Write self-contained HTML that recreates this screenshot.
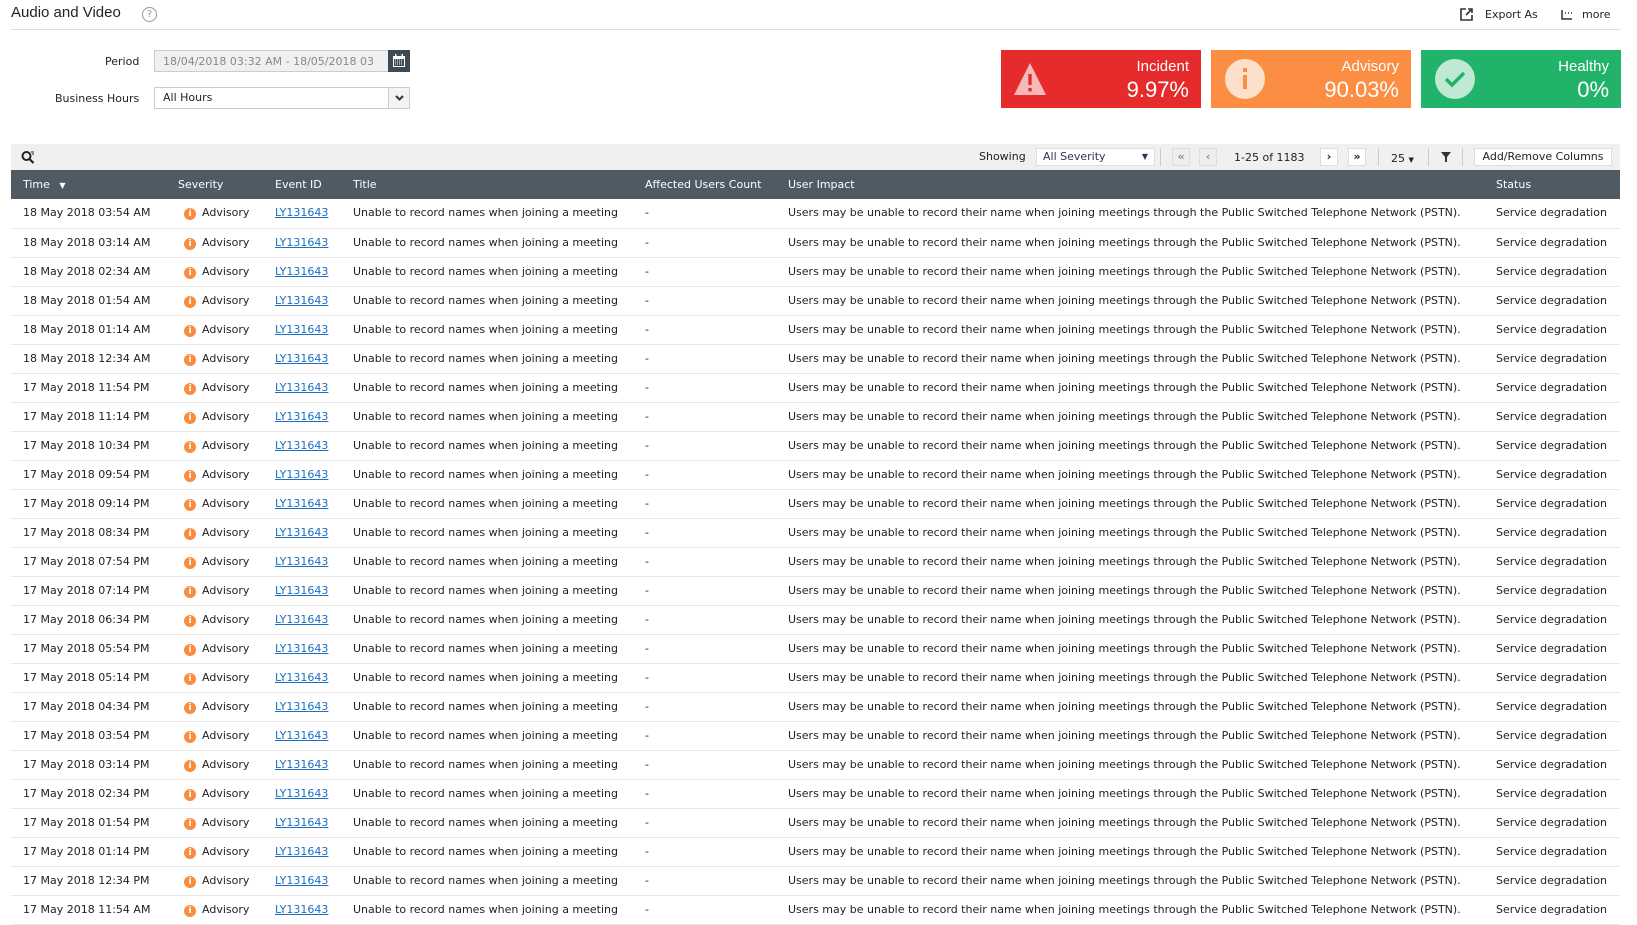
<!DOCTYPE html>
<html><head><meta charset="utf-8"><style>
*{box-sizing:border-box;margin:0;padding:0}
body{width:1637px;height:869px;overflow:hidden;background:#fff;font-family:"DejaVu Sans","Liberation Sans",sans-serif;font-size:11px;color:#222;position:relative}
.a{position:absolute;white-space:nowrap}
.box{position:absolute;top:50px;height:58px;width:200px;color:#fff;font-family:"Liberation Sans",sans-serif}
.box .l{position:absolute;right:12px;top:8px;font-size:15px}
.box .v{position:absolute;right:12px;top:27px;font-size:22px}
.btn{position:absolute;top:148px;height:18px;border:1px solid #ddd;background:#fff;text-align:center;line-height:16px;font-size:11px}
table{position:absolute;left:11px;top:170px;width:1609px;border-collapse:collapse;font-size:11px}
th{background:#4e5b65;color:#fff;font-weight:normal;text-align:left;height:29px;font-size:11px;padding:0}
td{height:29px;border-bottom:1px solid #e6e6e6;padding:0;white-space:nowrap;line-height:14px}
a{color:#1a6fc4;text-decoration:underline}
.ic{display:inline-block;width:12px;height:12px;border-radius:50%;background:#f98d3f;color:#fff;font-size:9px;font-weight:bold;text-align:center;line-height:12px;margin-right:6px;vertical-align:baseline;position:relative;top:0px}
</style></head><body>
<div class="a" style="left:11px;top:4px;font-size:15px;font-family:'Liberation Sans',sans-serif;color:#222">Audio and Video</div>
<div class="a" style="left:142px;top:7px;width:15px;height:15px;border:1px solid #999;border-radius:50%;color:#999;font-size:10px;text-align:center;line-height:13px">?</div>
<div class="a" style="left:11px;top:29px;width:1609px;height:1px;background:#ddd"></div>
<svg class="a" style="left:1460px;top:8px" width="13" height="13" viewBox="0 0 13 13"><path d="M6 1H1v11h11V7" fill="none" stroke="#333" stroke-width="1.6"/><path d="M6 7l6-6M8 1h4v4" fill="none" stroke="#333" stroke-width="1.6"/></svg>
<div class="a" style="left:1485px;top:8px;font-size:11px">Export As</div>
<svg class="a" style="left:1561px;top:9px" width="12" height="11"><path d="M1 1v9h10M4 4h1M7 4h1M10 4h1" stroke="#333" stroke-width="1.5" fill="none"/></svg>
<div class="a" style="left:1582px;top:8px;font-size:11px">more</div>

<div class="a" style="left:105px;top:55px;font-size:11px">Period</div>
<div class="a" style="left:154px;top:50px;width:235px;height:22px;border:1px solid #ccc;background:#f0f0f0;color:#888;font-size:11px;padding:4px 8px;overflow:hidden">18/04/2018 03:32 AM - 18/05/2018 03</div>
<div class="a" style="left:388px;top:50px;width:22px;height:22px;background:#3d4a54"><svg width="22" height="22"><rect x="5" y="6" width="12" height="11" fill="#fff"/><rect x="6" y="9" width="10" height="7" fill="#3d4a54"/><path d="M7 10h1M9 10h1M11 10h1M13 10h1M7 12h1M9 12h1M11 12h1M13 12h1M7 14h1M9 14h1M11 14h1M13 14h1" stroke="#fff"/><rect x="7" y="4" width="1.5" height="3" fill="#fff"/><rect x="13.5" y="4" width="1.5" height="3" fill="#fff"/></svg></div>
<div class="a" style="left:55px;top:92px;font-size:11px">Business Hours</div>
<div class="a" style="left:154px;top:87px;width:256px;height:22px;border:1px solid #ccc;background:#fff;font-size:11px;padding:3px 8px">All Hours</div>
<div class="a" style="left:388px;top:88px;width:21px;height:20px;border-left:1px solid #ccc;background:#f3f3f3"><svg width="21" height="20"><path d="M7 8l3.5 3.5L14 8" fill="none" stroke="#333" stroke-width="2"/></svg></div>

<div class="box" style="left:1001px;background:#e52b2b"><svg style="position:absolute;left:12px;top:12px" width="34" height="34"><path d="M17 1L33 33H1Z" fill="#f6b9b9"/><rect x="15.3" y="12" width="3.4" height="11" fill="#e52b2b"/><rect x="15.3" y="26" width="3.4" height="3.4" fill="#e52b2b"/></svg><div class="l">Incident</div><div class="v">9.97%</div></div>
<div class="box" style="left:1211px;background:#fb8e42"><svg style="position:absolute;left:14px;top:9px" width="40" height="40"><circle cx="20" cy="20" r="20" fill="#fde0cc"/><rect x="18" y="9" width="4" height="4" fill="#fb8e42"/><rect x="18" y="16" width="4" height="14" fill="#fb8e42"/></svg><div class="l">Advisory</div><div class="v">90.03%</div></div>
<div class="box" style="left:1421px;background:#22b36b"><svg style="position:absolute;left:14px;top:9px" width="40" height="40"><circle cx="20" cy="20" r="20" fill="#bfe9d3"/><path d="M11 20l6 6 12-12" fill="none" stroke="#22b36b" stroke-width="3.5"/></svg><div class="l">Healthy</div><div class="v">0%</div></div>

<div class="a" style="left:11px;top:144px;width:1609px;height:26px;background:#f0f0f0"></div>
<svg class="a" style="left:21px;top:150px" width="14" height="14"><circle cx="5.5" cy="6" r="4" fill="none" stroke="#222" stroke-width="2"/><path d="M8.5 9l4 4" stroke="#222" stroke-width="2.2"/><path d="M10 2h3M11 4h2" stroke="#222"/></svg>
<div class="a" style="left:979px;top:150px;font-size:11px">Showing</div>
<div class="btn" style="left:1036px;width:119px;text-align:left;padding-left:6px;color:#335">All Severity<span style="position:absolute;right:6px;top:0;font-size:8px">&#9660;</span></div>
<div class="a" style="left:1160px;top:148px;width:1px;height:18px;background:#ccc"></div>
<div class="btn" style="left:1172px;width:18px;color:#888;background:#eee;font-weight:bold">&laquo;</div>
<div class="btn" style="left:1199px;width:18px;color:#888;background:#eee;font-weight:bold">&lsaquo;</div>
<div class="a" style="left:1234px;top:151px;font-size:11px">1-25 of 1183</div>
<div class="btn" style="left:1320px;width:18px;font-weight:bold">&rsaquo;</div>
<div class="btn" style="left:1348px;width:18px;font-weight:bold">&raquo;</div>
<div class="a" style="left:1378px;top:148px;width:1px;height:18px;background:#ccc"></div>
<div class="a" style="left:1391px;top:152px;font-size:11px">25 <span style="font-size:7px">&#9660;</span></div>
<div class="a" style="left:1428px;top:148px;width:1px;height:18px;background:#ccc"></div>
<svg class="a" style="left:1440px;top:151px" width="12" height="12"><path d="M1 1h10L7 6v5H5V6Z" fill="#333"/></svg>
<div class="a" style="left:1462px;top:148px;width:1px;height:18px;background:#ccc"></div>
<div class="btn" style="left:1474px;width:138px;font-size:11px">Add/Remove Columns</div>

<table>
<colgroup><col style="width:166px"><col style="width:98px"><col style="width:78px"><col style="width:292px"><col style="width:143px"><col style="width:708px"><col></colgroup>
<thead><tr><th style="padding-left:12px">Time <span style="font-size:8px;margin-left:6px">&#9660;</span></th><th style="padding-left:1px">Severity</th><th>Event ID</th><th>Title</th><th>Affected Users Count</th><th>User Impact</th><th>Status</th></tr></thead>
<tbody id="tb"></tbody>
</table>
<script>
var t=["18 May 2018 03:54 AM","18 May 2018 03:14 AM","18 May 2018 02:34 AM","18 May 2018 01:54 AM","18 May 2018 01:14 AM","18 May 2018 12:34 AM","17 May 2018 11:54 PM","17 May 2018 11:14 PM","17 May 2018 10:34 PM","17 May 2018 09:54 PM","17 May 2018 09:14 PM","17 May 2018 08:34 PM","17 May 2018 07:54 PM","17 May 2018 07:14 PM","17 May 2018 06:34 PM","17 May 2018 05:54 PM","17 May 2018 05:14 PM","17 May 2018 04:34 PM","17 May 2018 03:54 PM","17 May 2018 03:14 PM","17 May 2018 02:34 PM","17 May 2018 01:54 PM","17 May 2018 01:14 PM","17 May 2018 12:34 PM","17 May 2018 11:54 AM"];
var h="";
for(var i=0;i<t.length;i++){h+='<tr><td style="padding-left:12px">'+t[i]+'</td><td style="padding-left:7px"><span class="ic">i</span>Advisory</td><td><a>LY131643</a></td><td>Unable to record names when joining a meeting</td><td>-</td><td>Users may be unable to record their name when joining meetings through the Public Switched Telephone Network (PSTN).</td><td>Service degradation</td></tr>';}
document.getElementById("tb").innerHTML=h;
</script>
</body></html>
